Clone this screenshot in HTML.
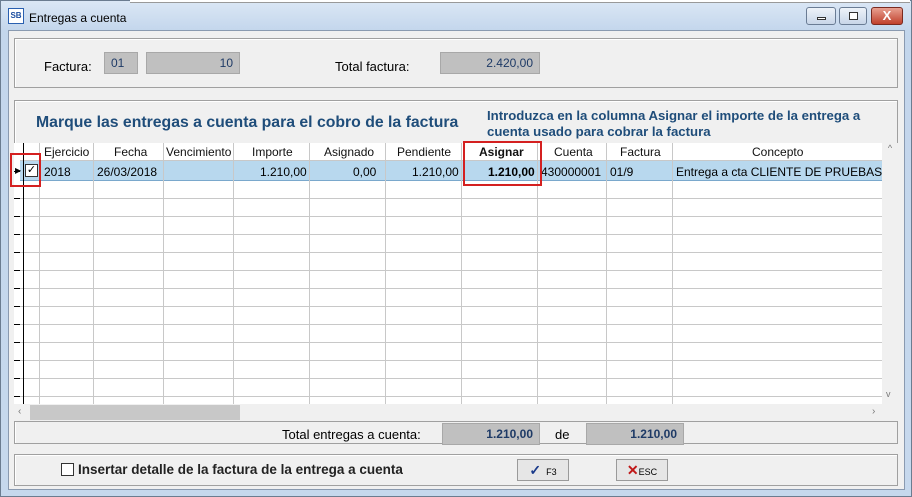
<!DOCTYPE html>
<html><head><meta charset="utf-8"><style>
*{box-sizing:border-box;margin:0;padding:0}
body{width:912px;height:497px;overflow:hidden;background:#fff;font-family:"Liberation Sans",sans-serif;font-size:12px;color:#000;position:relative}
.a{position:absolute}
.win{left:0;top:0;width:912px;height:497px;background:linear-gradient(#dbe7f5,#c3d6ec 30px,#c6d8ed);border:1px solid #6b7c90}
.body{left:8px;top:30px;width:897px;height:460px;background:#f0f0f0;border:1px solid #8a9ab0}
.panel{border:1px solid #a0a0a0;box-shadow:inset 1px 1px 0 #fff}
.fld{background:#c0c0c0;border:1px solid #a8a8a8;color:#1e3a66;text-align:right;padding-right:6px;font-size:12px;line-height:20px}
.blue{color:#1f4d7a;font-weight:bold}
.cell{position:absolute;top:0;height:100%;border-right:1px solid #c8c8c8}
.btn{background:#e6e6e6;border:1px solid #9a9a9a;text-align:center;font-size:9px;line-height:20px}
</style></head><body>
<div class="a win"></div>
<div class="a" style="left:130px;top:0;height:3px;background:#fff;border-bottom:1px solid #999;width:780px"></div>
<div class="a" style="left:8px;top:8px;width:16px;height:16px;background:#fff;border:1px solid #2a60b0;font-size:8px;font-weight:bold;color:#1a4da0;line-height:14px;text-align:center">SB</div>
<div class="a" style="left:29px;top:11px;font-size:12px">Entregas a cuenta</div>
<div class="a" style="left:806px;top:7px;width:30px;height:18px;border:1px solid #6a7c94;border-radius:3px;background:linear-gradient(#eef3f9,#c8d6e8)"><div class="a" style="left:10px;top:9px;width:9px;height:3px;border:1px solid #333;background:#fff"></div></div>
<div class="a" style="left:839px;top:7px;width:28px;height:18px;border:1px solid #6a7c94;border-radius:3px;background:linear-gradient(#eef3f9,#c8d6e8)"><div class="a" style="left:9px;top:4px;width:9px;height:8px;border:1px solid #333;background:#fff"></div></div>
<div class="a" style="left:871px;top:7px;width:32px;height:18px;border:1px solid #7a2a20;border-radius:3px;background:linear-gradient(#e8a090,#c0402c);color:#fff;font-weight:bold;font-size:13px;text-align:center;line-height:16px">X</div>
<div class="a body"></div>
<div class="a panel" style="left:14px;top:38px;width:884px;height:50px"></div>
<div class="a" style="left:44px;top:59px;font-size:13px">Factura:</div>
<div class="a fld" style="left:104px;top:52px;width:34px;text-align:left;padding-left:6px">01</div>
<div class="a fld" style="left:146px;top:52px;width:94px">10</div>
<div class="a" style="left:335px;top:59px;font-size:13px">Total factura:</div>
<div class="a fld" style="left:440px;top:52px;width:100px">2.420,00</div>
<div class="a panel" style="left:14px;top:100px;width:884px;height:344px"></div>
<div class="a blue" style="left:36px;top:114px;font-size:15.8px">Marque las entregas a cuenta para el cobro de la factura</div>
<div class="a blue" style="left:487px;top:108px;font-size:13.2px;line-height:16px;width:410px">Introduzca en la columna Asignar el importe de la entrega a cuenta usado para cobrar la factura</div>
<div class="a" style="left:14px;top:143px;width:868px;height:261px;background:#fff;overflow:hidden;
background-image:repeating-linear-gradient(#fff 0,#fff 17px,#c8c8c8 17px,#c8c8c8 18px);background-position:0 38px">
<div class="a" style="left:0;top:0;width:868px;height:18px;background:#fff;border-bottom:1px solid #c8c8c8"></div>
<div class="a" style="left:0;top:18px;width:868px;height:20px;background:#b8d8ee;border-bottom:1px solid #7aa8cc"></div>
<div class="cell" style="left:0;width:10px;border-right:1px solid #000;background:repeating-linear-gradient(#fff 0,#fff 17px,#000 17px,#000 18px);background-position:0 38px;background-size:6px 100%;background-repeat:repeat-y"></div>
<div class="cell" style="left:10px;width:16px"></div>
<div class="cell" style="left:26px;width:54px"></div>
<div class="cell" style="left:80px;width:70px"></div>
<div class="cell" style="left:150px;width:70px"></div>
<div class="cell" style="left:220px;width:76px"></div>
<div class="cell" style="left:296px;width:76px"></div>
<div class="cell" style="left:372px;width:76px"></div>
<div class="cell" style="left:448px;width:76px"></div>
<div class="cell" style="left:524px;width:69px"></div>
<div class="cell" style="left:593px;width:66px"></div>
</div>
<div class="a" style="left:882px;top:143px;width:16px;height:261px;background:#f0f0f0;color:#777;font-size:9px;text-align:center">^<div class="a" style="left:4px;top:246px">v</div></div>
<div class="a" style="top:145px;left:0;width:912px;font-size:12px;color:#111">
<span class="a" style="left:44px">Ejercicio</span><span class="a" style="left:114px">Fecha</span><span class="a" style="left:166px">Vencimiento</span><span class="a" style="left:252px">Importe</span><span class="a" style="left:324px">Asignado</span><span class="a" style="left:397px">Pendiente</span><span class="a" style="left:479px;font-weight:bold">Asignar</span><span class="a" style="left:554px">Cuenta</span><span class="a" style="left:620px">Factura</span><span class="a" style="left:752px">Concepto</span></div>
<div class="a" style="top:165px;left:0;width:912px;font-size:12px">
<span class="a" style="left:15px;font-size:8px;top:1px">▶</span><span class="a" style="left:25px;top:-1px;width:13px;height:13px;border:1px solid #333;background:#fff;font-size:11px;line-height:11px;text-align:center">✓</span>
<span class="a" style="left:44px">2018</span><span class="a" style="left:97px">26/03/2018</span><span class="a" style="left:260px">1.210,00</span><span class="a" style="left:353px">0,00</span><span class="a" style="left:412px">1.210,00</span><span class="a" style="left:488px;font-weight:bold">1.210,00</span><span class="a" style="left:541px">430000001</span><span class="a" style="left:610px">01/9</span><span class="a" style="left:676px">Entrega a cta CLIENTE DE PRUEBAS</span></div>
<div class="a" style="left:10px;top:153px;width:31px;height:34px;border:2px solid #d42020"></div>
<div class="a" style="left:463px;top:141px;width:79px;height:45px;border:2px solid #d42020"></div>
<div class="a" style="left:14px;top:404px;width:884px;height:17px;background:#f0f0f0;color:#777;font-size:10px"><span class="a" style="left:4px;top:2px">‹</span><div class="a" style="left:16px;top:1px;width:210px;height:15px;background:#c8c8c8"></div><span class="a" style="left:858px;top:2px">›</span></div>
<div class="a" style="left:14px;top:421px;width:884px;height:1px;background:#a0a0a0"></div>
<div class="a" style="left:282px;top:427px;font-size:13px">Total entregas a cuenta:</div>
<div class="a fld" style="left:442px;top:423px;width:98px;font-weight:bold">1.210,00</div>
<div class="a" style="left:555px;top:427px;font-size:13px">de</div>
<div class="a fld" style="left:586px;top:423px;width:98px;font-weight:bold">1.210,00</div>
<div class="a panel" style="left:14px;top:454px;width:884px;height:32px"></div>
<div class="a" style="left:61px;top:463px;width:13px;height:13px;border:1px solid #333;background:#fff"></div>
<div class="a" style="left:78px;top:462px;font-size:13.5px;font-weight:bold;color:#222">Insertar detalle de la factura de la entrega a cuenta</div>
<div class="a btn" style="left:517px;top:459px;width:52px;height:22px"><span style="color:#1a3a8a;font-size:14px;font-weight:bold">✓</span>&nbsp; F3</div>
<div class="a btn" style="left:616px;top:459px;width:52px;height:22px"><span style="color:#c01818;font-size:14px;font-weight:bold">✕</span>ESC</div>
</body></html>
